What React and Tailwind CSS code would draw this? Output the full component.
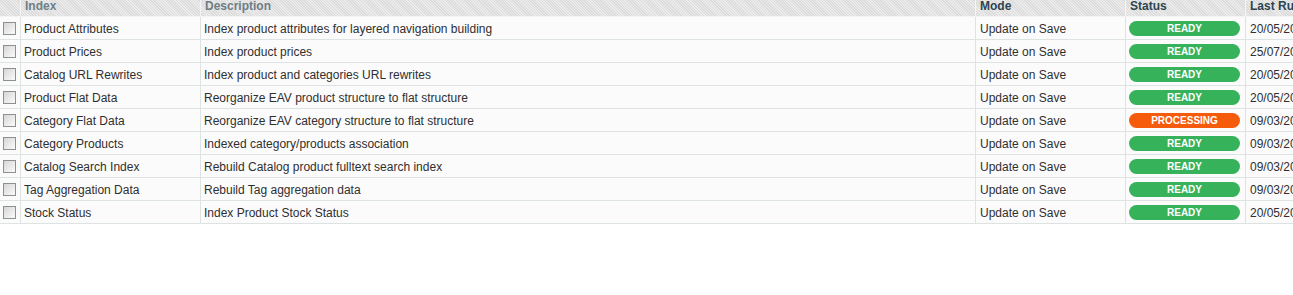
import React from 'react';

const rows = [
  { name: 'Product Attributes', desc: 'Index product attributes for layered navigation building', status: 'READY', date: '20/05/2013' },
  { name: 'Product Prices', desc: 'Index product prices', status: 'READY', date: '25/07/2013' },
  { name: 'Catalog URL Rewrites', desc: 'Index product and categories URL rewrites', status: 'READY', date: '20/05/2013' },
  { name: 'Product Flat Data', desc: 'Reorganize EAV product structure to flat structure', status: 'READY', date: '20/05/2013' },
  { name: 'Category Flat Data', desc: 'Reorganize EAV category structure to flat structure', status: 'PROCESSING', date: '09/03/2013' },
  { name: 'Category Products', desc: 'Indexed category/products association', status: 'READY', date: '09/03/2013' },
  { name: 'Catalog Search Index', desc: 'Rebuild Catalog product fulltext search index', status: 'READY', date: '09/03/2013' },
  { name: 'Tag Aggregation Data', desc: 'Rebuild Tag aggregation data', status: 'READY', date: '09/03/2013' },
  { name: 'Stock Status', desc: 'Index Product Stock Status', status: 'READY', date: '20/05/2013' },
];

const cols = 'grid grid-cols-[21px_180px_775px_150px_120px_200px]';

const Checkbox = () => (
  <span className="block w-[13px] h-[13px] border border-[#8e8f8f] bg-gradient-to-br from-[#d6d6d6] to-[#fbfbfb]" />
);

const StatusPill = ({ status }) => (
  <span
    className={
      'flex items-center justify-center h-[15px] w-[111px] rounded-full text-[10px] leading-none font-bold text-white ' +
      (status === 'READY' ? 'bg-[#36b35a]' : 'bg-[#f55b0a]')
    }
  >
    {status}
  </span>
);

export default function App() {
  const cell = 'border-r border-b border-[#dde2e3] flex items-center pt-px';
  const head = 'border-r border-b border-[#f4f4f4] flex items-start pl-1 leading-[14px] -mt-px';
  return (
    <div className="w-[1293px] h-[295px] overflow-hidden bg-white font-['Liberation_Sans',Arial,sans-serif] text-[12px] text-[#2f2f2f]">
      <div className="w-[1446px]">
        <div className={`${cols} h-[17px] bg-[repeating-linear-gradient(45deg,#dcdcdc_0px,#dcdcdc_1px,#ebebeb_1px,#ebebeb_2px)] font-bold`}>
          <div className={head} />
          <div className={`${head} text-[#6f7d85]`}>Index</div>
          <div className={`${head} text-[#6f7d85]`}>Description</div>
          <div className={`${head} text-[#2d444f]`}>Mode</div>
          <div className={`${head} text-[#2d444f]`}>Status</div>
          <div className={`${head} text-[#2d444f]`}>Last Run</div>
        </div>
        {rows.map((r) => (
          <div key={r.name} className={`${cols} h-[23px] bg-[#fcfbfc]`}>
            <div className={`${cell} pl-[3px]`}>
              <Checkbox />
            </div>
            <div className={`${cell} pl-[3px]`}>{r.name}</div>
            <div className={`${cell} pl-[3px]`}>{r.desc}</div>
            <div className={`${cell} pl-[4px]`}>Update on Save</div>
            <div className={`${cell} pl-[3px]`}>
              <StatusPill status={r.status} />
            </div>
            <div className={`${cell} pl-[4px]`}>{r.date}</div>
          </div>
        ))}
      </div>
    </div>
  );
}
